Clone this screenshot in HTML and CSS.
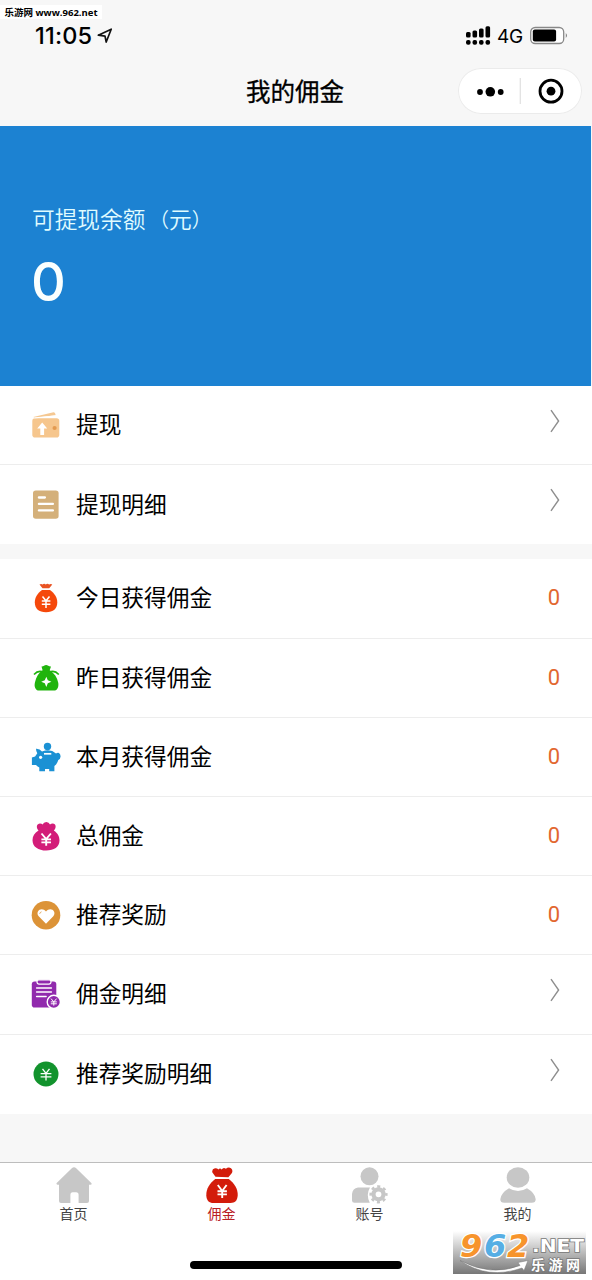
FILE: index.html
```html
<!DOCTYPE html>
<html lang="zh-CN">
<head>
<meta charset="utf-8">
<title>我的佣金</title>
<link rel="stylesheet" href="styles.css">
</head>
<body>
<div class="app">
  <header class="header">
    <div class="site-tag">乐游网 www.962.net</div>
    <div class="status">
      <span class="time">11:05</span>
      <svg class="locate" width="16" height="16" viewBox="0 0 16 16"><path d="M1.3 7.2 14.2 1.2 9.2 14 8 8.2Z" fill="none" stroke="#111" stroke-width="1.7" stroke-linejoin="round"/></svg>
      <svg class="signal" width="26" height="20" viewBox="0 0 26 20"><g fill="#000"><rect x="0" y="6" width="4.6" height="5.6" rx="1.5"/><rect x="6.5" y="4.5" width="4.6" height="7.1" rx="1.5"/><rect x="13" y="2.5" width="4.6" height="9.1" rx="1.5"/><rect x="19.5" y="0.3" width="4.6" height="11.3" rx="1.5"/><rect x="0" y="14" width="4.6" height="4.8" rx="2"/><rect x="6.5" y="14" width="4.6" height="4.8" rx="2"/><rect x="13" y="14" width="4.6" height="4.8" rx="2"/><rect x="19.5" y="14" width="4.6" height="4.8" rx="2"/></g></svg>
      <span class="network">4G</span>
      <svg class="battery" width="40" height="20" viewBox="0 0 40 20"><rect x=".7" y="1.5" width="33" height="16" rx="4.5" fill="#fff" stroke="#888" stroke-width="1.3"/><rect x="2.8" y="3.6" width="23.3" height="12" rx="2" fill="#000"/><path d="M35.8 7q2.2 2.5 0 5Z" fill="#777"/></svg>
    </div>
    <div class="nav">
      <h1 class="title">我的佣金</h1>
      <div class="capsule">
        <svg width="124" height="46" viewBox="0 0 124 46"><circle cx="22" cy="24" r="2.9"/><circle cx="32.3" cy="23.8" r="4.8"/><circle cx="42.7" cy="24" r="2.9"/><path d="M62.3 10v26" stroke="#e2e2e2" stroke-width="1.3"/><circle cx="93" cy="23.2" r="11" fill="none" stroke="#000" stroke-width="2.8"/><circle cx="93" cy="23.2" r="4.4"/></svg>
      </div>
    </div>
  </header>

  <section class="balance">
    <div class="balance-label">可提现余额<span class="paren open">（</span>元<span class="paren close">）</span></div>
    <div class="balance-value">0</div>
  </section>

  <main>
    <ul class="list">
      <li class="row">
        <svg class="icon" viewBox="0 0 30 30"><path d="M2.3 7 22.5 2.3q1.5-.1 1.9 1.6l.2 1.400L4 7.800Z" fill="#f5c892"/><rect x="1.3" y="8.3" width="27" height="19.3" rx="2.8" fill="#f6c68d"/><path d="M3.500 7.900 25 5.800" stroke="#fff" stroke-width="1"/><path d="m11.2 12.6 5 6h-3.1v6.5H9.3v-6.5H6.2Z" fill="#fff"/><circle cx="23.6" cy="18" r="2.1" fill="#e39a50"/></svg>
        <span class="name">提现</span>
        <svg class="arrow" viewBox="0 0 10 24"><path d="M1 1.2 8.6 12 1 22.8"/></svg>
      </li>
      <li class="row">
        <svg class="icon" viewBox="0 0 30 30"><rect x="2" y=".4" width="25.6" height="28.4" rx="2.8" fill="#d4b07a"/><path d="M7.9 7.500h6M7.9 13.900h14M7.9 20.400h14" stroke="#fff" stroke-width="2.300" stroke-linecap="round"/></svg>
        <span class="name">提现明细</span>
        <svg class="arrow" viewBox="0 0 10 24"><path d="M1 1.2 8.6 12 1 22.8"/></svg>
      </li>
    </ul>

    <ul class="list">
      <li class="row">
        <svg class="icon" viewBox="0 0 30 30"><path d="M8.5 1.4q2-1 3 .2 1.5-1.6 3.3-.2 1.8-1.4 3.3.2 1.6-1.2 3.2-.1l-3.1 3.8h-6.7Z" fill="#e95323"/><path d="M11 7h8c4.3 3.4 7.3 7.1 7.3 12.3 0 6.5-4 9.900-11.300 9.900S3.800 25.800 3.800 19.300C3.800 14.100 6.700 10.400 11 7Z" fill="#f5480b"/><path d="m11.500 13.500 3.500 4.300 3.500-4.300M10.800 18h8.600M10.800 21.200h8.600M15 18v7" fill="none" stroke="#fff" stroke-width="1.500"/></svg>
        <span class="name">今日获得佣金</span><span class="count">0</span>
      </li>
      <li class="row">
        <svg class="icon" viewBox="0 0 30 30"><path d="M10.500 3.500q1.300.2 2.500-.8 2-1.500 4.300 0 1.200 1 2.700.8l-1.300 3.700c4.500 2.800 7.600 7.100 8.600 12.800.6 4.800-1.500 7.600-4 7.600H8.100c-3.600 0-5.300-3.800-4.100-8.300C5.200 13.800 7.500 10 11.600 7.200Z" fill="#20b40d"/><path d="M3 11.500q4.500-5 10-2M27.800 11.500q-4.500-5-10-2" fill="none" stroke="#20b40d" stroke-width="1.600"/><path d="m15.300 13.700 1.500 3.600 3.600 1.500-3.600 1.500-1.500 3.600-1.500-3.600-3.600-1.500 3.600-1.500Z" fill="#fff"/></svg>
        <span class="name">昨日获得佣金</span><span class="count">0</span>
      </li>
      <li class="row">
        <svg class="icon" viewBox="0 0 30 30"><circle cx="16.500" cy="4.500" r="3.700" fill="#1b91d4"/><path d="M5 6.800q3.600-.3 6 2.600 8.500-3 14 2 1.500-1 3-.5 1.600 1.400 1.600 3.600-.2 2.700-2.300 3.400c-1 3.300-2.300 5-3.900 6.200v5.100h-5.200v-2.300h-4.200v2.300H8.300v-3.600Q6 24.200 5 22.900H.9v-7.400l3.200-1.100 2.200-3.200Q5 9.500 5 6.800Z" fill="#1b91d4"/><path d="M13 11.800h7.300" stroke="#fff" stroke-width="1.700"/><circle cx="9.600" cy="15.300" r="1.600" fill="#fff"/></svg>
        <span class="name">本月获得佣金</span><span class="count">0</span>
      </li>
      <li class="row">
        <svg class="icon" viewBox="0 0 30 30"><path d="M7.500 9.500C4.500 6 6 2.500 9 2.400q1.800 0 2.600 1 1-2.500 3.700-2.500t3.700 2.500q1-1 2.800-1c3.200.3 4 4 1 7.100 4 3 5.700 5.800 5.700 10 0 6.500-5.500 10-13.300 10S1.500 25.800 1.500 19.200C1.500 15 3.500 12 7.500 9.500Z" fill="#d31d79"/><path d="m10.500 12.500 4.700 5.500 4.700-5.500M10.400 18.400h9.600M10.400 21.400h9.600M15.200 18v6.700" fill="none" stroke="#fff" stroke-width="1.900"/></svg>
        <span class="name">总佣金</span><span class="count">0</span>
      </li>
      <li class="row">
        <svg class="icon" viewBox="0 0 30 30"><circle cx="15" cy="15.200" r="14.300" fill="#dc9337"/><path d="m15 23.700-7.300-7.500c-4-5.300 3.300-10 7.300-4.700 4-5.300 11.300-.6 7.300 4.700Z" fill="#fff"/><path d="M8.700 13.800q.3-1.600 1.800-2" fill="none" stroke="#dc9337" stroke-width=".8"/></svg>
        <span class="name">推荐奖励</span><span class="count">0</span>
      </li>
      <li class="row">
        <svg class="icon" viewBox="0 0 30 30"><rect x=".8" y="2.500" width="24.500" height="26" rx="2.800" fill="#912aad"/><rect x="6" y=".8" width="14" height="4.300" rx="2" fill="#912aad" stroke="#fff" stroke-width="1.200"/><path d="M5.600 9h14.800M5.600 13.100h14.800M5.600 17.600h9.500" stroke="#fff" stroke-width="1.500" stroke-linecap="round"/><circle cx="22.800" cy="22.900" r="6.600" fill="#912aad" stroke="#fff" stroke-width="1.400"/><path d="m20 19.600 2.800 3.300 2.800-3.300M19.800 22.900h6M19.800 24.800h6M22.800 23v3.600" fill="none" stroke="#fff" stroke-width="1"/></svg>
        <span class="name">佣金明细</span>
        <svg class="arrow" viewBox="0 0 10 24"><path d="M1 1.2 8.6 12 1 22.8"/></svg>
      </li>
      <li class="row">
        <svg class="icon" viewBox="0 0 30 30"><circle cx="15" cy="15" r="12.500" fill="#12932d"/><path d="m11.500 9.800 3.500 4.700 3.500-4.700M9.600 14.600h10.800M9.600 17.800h10.800M15 14.500v7" fill="none" stroke="#fff" stroke-width="1.300"/></svg>
        <span class="name">推荐奖励明细</span>
        <svg class="arrow" viewBox="0 0 10 24"><path d="M1 1.2 8.6 12 1 22.8"/></svg>
      </li>
    </ul>
  </main>

  <nav class="tabs">
    <div class="tab">
      <svg viewBox="0 0 40 38"><path d="M17.800 1.200q2.200-1.700 4.400 0L37.300 16q1 1.500-.8 1.700H35v16.200q0 2-2 2h-8.400v-8q0-2.600-2.500-2.600h-3.400q-2.300 0-2.300 2.600v8H7q-2 0-2-2V17.700H3.500q-1.700-.3-.8-1.700Z" fill="#c7c7c7"/></svg>
      <span>首页</span>
    </div>
    <div class="tab active">
      <svg viewBox="0 0 40 38"><path d="M13.500 9.800 10.400 5.500Q9.500 2 13 1.300q2-.2 3.500 1.200Q18 .3 19.600 2.500q2-2.800 4.300-.7Q26.500-.3 29 1.300q2.400 1.900.7 5l-3.300 3.900Z" fill="#d31c0b"/><path d="M13.200 12h13.600C32.500 16.500 36 22 35.700 28.300 35.300 34 33 36 28.500 36h-17C7 36 4.500 33.500 4.300 28.500 4.100 22 7.500 16.500 13.200 12Z" fill="#d31c0b"/><path d="m15.800 18 4.400 6 4.400-6M15.500 24.300h9.400M15.500 27.400h9.400M20.200 24v7" fill="none" stroke="#fff" stroke-width="1.900"/></svg>
      <span>佣金</span>
    </div>
    <div class="tab">
      <svg viewBox="0 0 40 38"><g fill="#c7c7c7"><circle cx="19.500" cy="9.300" r="9"/><path d="M8 20.500h12q-4.300 7.300-.2 15.300H4.500Q2 35.800 2 33.500V27q.6-5.700 6-6.500Z"/></g><circle cx="28.500" cy="27.300" r="5" fill="none" stroke="#c7c7c7" stroke-width="4.200"/><circle cx="28.500" cy="27.300" r="7.800" fill="none" stroke="#c7c7c7" stroke-width="2.600" stroke-dasharray="3.063 3.063" stroke-dashoffset="1.532"/></svg>
      <span>账号</span>
    </div>
    <div class="tab">
      <svg viewBox="0 0 40 38"><g fill="#c7c7c7"><ellipse cx="20" cy="10.500" rx="11.300" ry="10.300"/><path d="M11 21.200q9 5.600 18 0 8 4.600 8.700 11 0 3.600-4 3.600H6.300q-4 0-4-3.600Q3 25.800 11 21.200Z"/></g></svg>
      <span>我的</span>
    </div>
  </nav>

  <div class="home-bar"></div>

  <div class="watermark">
    <svg width="133" height="53" viewBox="0 -10 133 53">
      <defs><linearGradient id="shade" x2="0" y2="1"><stop stop-color="#fff"/><stop offset=".25" stop-color="#ddd"/><stop offset="1" stop-color="#777"/></linearGradient></defs>
      <rect width="133" height="43" fill="url(#shade)"/>
      <path d="M7 29.500Q38 46 67 34.500l-2-3 10-2-4 10-2-2.500Q35 49 7 29.500Z" fill="#fff" stroke="#777" stroke-width=".5"/>
      <g class="wm-digits"><text x="7" y="26" fill="#f7942c">9</text><text x="31" y="26" fill="#56aee4">6</text><text x="54" y="26" fill="#f7942c">2</text></g>
      <text class="wm-net" x="79" y="21" textLength="52" lengthAdjust="spacingAndGlyphs">.NET</text>
      <text class="wm-cn" x="78" y="38.500" textLength="49">乐游网</text>
    </svg>
  </div>
</div>
</body>
</html>
```

FILE: styles.css
```css
* { box-sizing: border-box; }

body {
  margin: 0;
  background: #fff;
  color: #000;
  font-family: Inter, "Noto Sans CJK SC", sans-serif;
}

.app {
  position: relative;
  display: flex;
  flex-direction: column;
  height: 1280px;
  overflow: hidden;
  background: #f7f7f7;
}

.header { position: relative; height: 126px; padding-top: 22px; flex: none; }

.site-tag {
  position: absolute;
  left: 0;
  top: 5px;
  width: 102px;
  height: 14px;
  padding-left: 4.500px;
  background: #fff;
  font: 700 9.500px/15px "Open Sans", "Noto Sans CJK SC", sans-serif;
  white-space: nowrap;
}

.status { display: flex; align-items: center; height: 28px; padding: 0 22px 0 35px; }
.time { width: 58px; font-size: 23.500px; font-weight: 500; line-height: 26px; letter-spacing: 0.200px; }
.locate { margin-left: 4px; }
.signal { margin-left: auto; }
.network { width: 27px; margin: 0 6px 0 5px; font-size: 19px; letter-spacing: -0.300px; }

.nav {
  display: grid;
  grid-template-columns: 1fr auto 1fr;
  align-items: center;
  height: 48px;
  margin-top: 17px;
  padding-right: 10px;
}
.title {
  grid-column: 2;
  margin: 0 0 1px 8px;
  font: 400 24.500px/36px "Noto Sans CJK SC", sans-serif;
  -webkit-text-stroke: 0.300px #000;
}
.capsule {
  justify-self: end;
  width: 124px;
  height: 46px;
  border-radius: 23px;
  background: #fff;
  box-shadow: inset 0 0 0 1px #ebebeb;
}
.capsule svg { display: block; }

.balance {
  flex: none;
  width: 591px;
  height: 260px;
  padding: 76px 32px 0;
  background: #1c82d2;
  color: #e0fcff;
}
.balance-label { display: flex; font: 350 22.700px/34px "Noto Sans CJK SC", sans-serif; }
.paren { font-size: 20px; }
.open { width: 23.500px; text-align: right; }
.balance-value { margin: 12px 0 0 -1px; font-size: 54px; line-height: 68px; font-weight: 500; color: #fafffe; }

.list { margin: 0 0 15px; padding: 0; list-style: none; background: #fff; }
.row {
  display: flex;
  align-items: center;
  height: 79.200px;
  padding: 0 32px 0 31px;
  border-bottom: 1px solid #ededed;
}
.row:last-child { border-bottom: 0; }
.icon { width: 30px; height: 30px; flex: none; }
.name { margin: 0 0 2px 15px; font: 400 22.700px/34px "Noto Sans CJK SC", sans-serif; }
.arrow {
  width: 10px;
  height: 24px;
  margin: 0 0 9px auto;
  fill: none;
  stroke: #8e8e8e;
  stroke-width: 1.400;
}
.count {
  margin-left: auto;
  color: #e2672f;
  font: 400 22px/30px Roboto, sans-serif;
}

.tabs {
  display: grid;
  grid-template-columns: repeat(4, 1fr);
  height: 118px;
  margin-top: auto;
  padding-top: 4px;
  border-top: 1px solid #bdbdbd;
  background: #fff;
}
.tab {
  display: flex;
  flex-direction: column;
  align-items: center;
  margin-left: -1px;
  color: #444;
  font: 400 14px/20px "Noto Sans CJK SC", sans-serif;
}
.tab svg { width: 40px; height: 38px; }
.tab span { margin-top: -2px; }
.active { color: #b92025; }

.home-bar {
  position: absolute;
  left: 190px;
  top: 1261px;
  width: 212px;
  height: 8px;
  border-radius: 4px;
  background: #000;
}

.watermark { position: absolute; left: 453px; top: 1221px; width: 133px; height: 53px; }
.watermark svg { display: block; }
.wm-digits {
  font: italic 700 32px "DejaVu Sans", sans-serif;
  stroke: #fff;
  stroke-width: 2.500;
  paint-order: stroke;
}
.wm-net, .wm-cn {
  fill: #fff;
  stroke: #777;
  stroke-width: 1.500;
  paint-order: stroke;
}
.wm-net { font: 700 18px "DejaVu Sans", sans-serif; }
.wm-cn { font: 700 14px "Noto Sans CJK SC", sans-serif; }
```
